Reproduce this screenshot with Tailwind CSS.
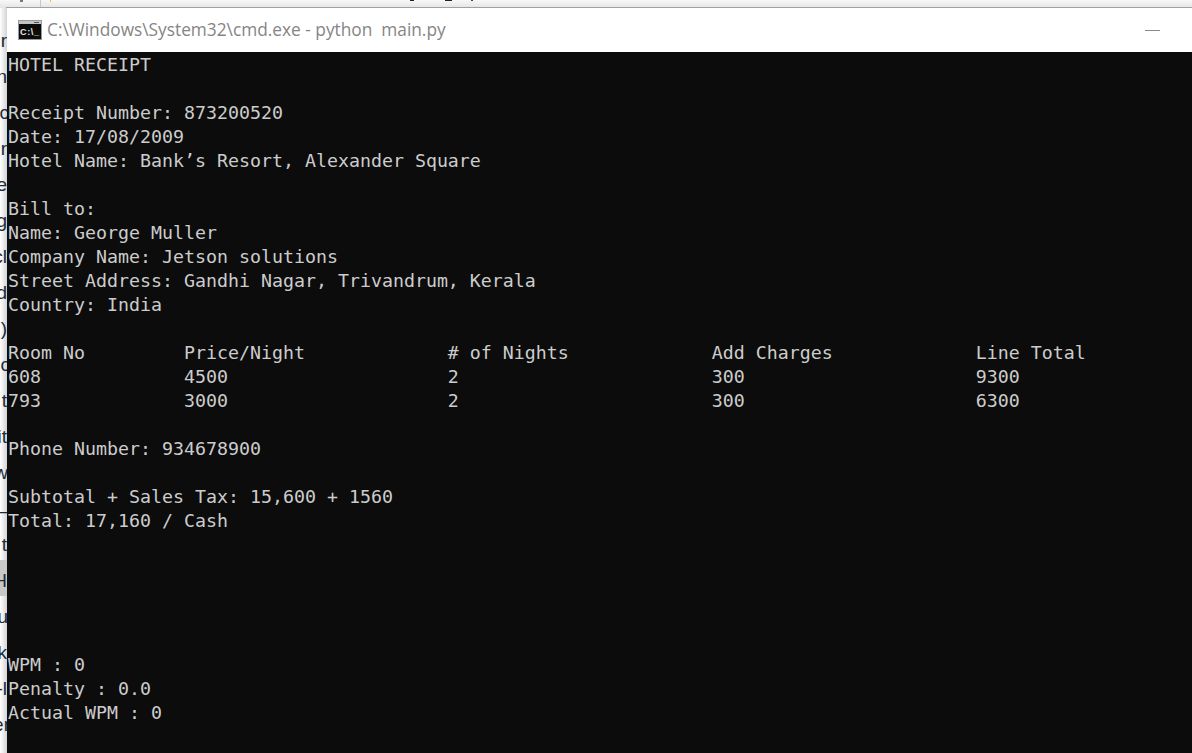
<!DOCTYPE html>
<html lang="en">
<head>
    <meta charset="UTF-8">
    <title>cmd.exe - python main.py</title>
    <script src="https://cdn.jsdelivr.net/npm/@tailwindcss/browser@4"></script>
</head>
<body class="h-[753px] w-[1192px] overflow-hidden bg-white">
    <div class="flex flex-col h-full">
        <!-- strip of the window behind, top -->
        <div class="h-2 shrink-0 flex bg-linear-to-b from-[#f8f8f8] to-[#e4e4e4]">
            <div class="w-[6px] shrink-0"></div>
            <div class="grow flex items-start border-b border-[#a0a0a0]">
                <div class="ml-[14px] w-[3px] h-[2px] bg-[#777777]"></div>
                <div class="ml-[17px] w-px h-[7px] bg-[#c8c8c8]"></div>
                <div class="ml-[9px] w-px h-[2px] bg-[#f5b942]"></div>
                <div class="ml-[359px] w-[4px] h-px bg-[#222222]"></div>
                <div class="ml-[31px] w-[7px] h-px bg-[#222222]"></div>
                <div class="ml-[19px] w-[2px] h-px bg-[#444444]"></div>
            </div>
        </div>
        <div class="flex grow min-h-0">
            <!-- strip of the window behind, left -->
            <div class="w-[7px] shrink-0 overflow-hidden pt-3 bg-linear-to-r from-white to-[#d4d4d4] text-[#1f2a36] font-['Liberation_Sans',sans-serif] text-[19px] leading-[42px]">
                <div class="h-9 flex justify-end"><span class="shrink-0">r</span></div>
                <div class="h-9 flex justify-end"><span class="shrink-0">n</span></div>
                <div class="h-9 flex justify-end"><span class="shrink-0 -mr-[2px]">uc</span></div>
                <div class="h-9 flex justify-end"><span class="shrink-0">r</span></div>
                <div class="h-9 flex justify-end"><span class="shrink-0">e</span></div>
                <div class="h-9 flex justify-end"><span class="shrink-0">g</span></div>
                <div class="h-9 flex justify-end"><span class="shrink-0">cl</span></div>
                <div class="h-9 flex justify-end"><span class="shrink-0">d</span></div>
                <div class="h-9 flex justify-end"><span class="shrink-0">d)</span></div>
                <div class="h-9 flex justify-end"><span class="shrink-0 -mr-[3px]">nc</span></div>
                <div class="h-9 flex justify-end"><span class="shrink-0">t</span></div>
                <div class="h-9 flex justify-end"><span class="shrink-0">it</span></div>
                <div class="h-9 flex justify-end"><span class="shrink-0 -mr-[1px]">w</span></div>
                <div class="h-9 flex justify-end"><span class="shrink-0 -mt-1.5">_</span></div>
                <div class="h-9 flex justify-end"><span class="shrink-0">t</span></div>
                <div class="h-9 flex justify-end bg-[#c8c8c8]"><span class="shrink-0">H</span></div>
                <div class="h-9 flex justify-end"><span class="shrink-0 -mr-[1px]">nu</span></div>
                <div class="h-9 flex justify-end"><span class="shrink-0">ck</span></div>
                <div class="h-9 flex justify-end"><span class="shrink-0">-l</span></div>
                <div class="h-9 flex justify-end"><span class="shrink-0 -mr-[3px]">er</span></div>
            </div>
            <div class="grow flex flex-col min-w-0">
                <!-- title bar -->
                <div class="h-11 shrink-0 bg-white flex items-center pl-[11px] pr-8">
                    <svg width="24" height="20" viewBox="0 0 24 20" class="shrink-0">
                        <rect width="24" height="20" fill="#9a9a9a"/>
                        <rect x="1" y="1" width="22" height="3" fill="#c4c4c4"/>
                        <rect x="16" y="2" width="5" height="1" fill="#555555"/>
                        <rect x="1" y="4" width="22" height="15" fill="#0c0c0c"/>
                        <text x="2" y="15" font-family="Liberation Sans, sans-serif" font-size="9" font-weight="700" fill="#e8e8e8" textLength="19">C:\_</text>
                    </svg>
                    <span class="ml-[5px] text-[17.3px] text-[#858585] font-['Open_Sans',sans-serif] whitespace-pre">C:\Windows\System32\cmd.exe - python  main.py</span>
                    <div class="ml-auto w-[15px] h-px bg-[#8a8a8a]"></div>
                </div>
                <!-- console -->
                <pre class="grow bg-[#0c0c0c] text-[#cccccc] pt-[1px] pl-px font-['DejaVu_Sans_Mono',monospace] text-[18.27px] leading-6">HOTEL RECEIPT

Receipt Number: 873200520
Date: 17/08/2009
Hotel Name: Bank’s Resort, Alexander Square

Bill to:
Name: George Muller
Company Name: Jetson solutions
Street Address: Gandhi Nagar, Trivandrum, Kerala
Country: India

Room No         Price/Night             # of Nights             Add Charges             Line Total
608             4500                    2                       300                     9300
793             3000                    2                       300                     6300

Phone Number: 934678900

Subtotal + Sales Tax: 15,600 + 1560
Total: 17,160 / Cash





WPM : 0
Penalty : 0.0
Actual WPM : 0</pre>
            </div>
        </div>
    </div>
</body>
</html>
